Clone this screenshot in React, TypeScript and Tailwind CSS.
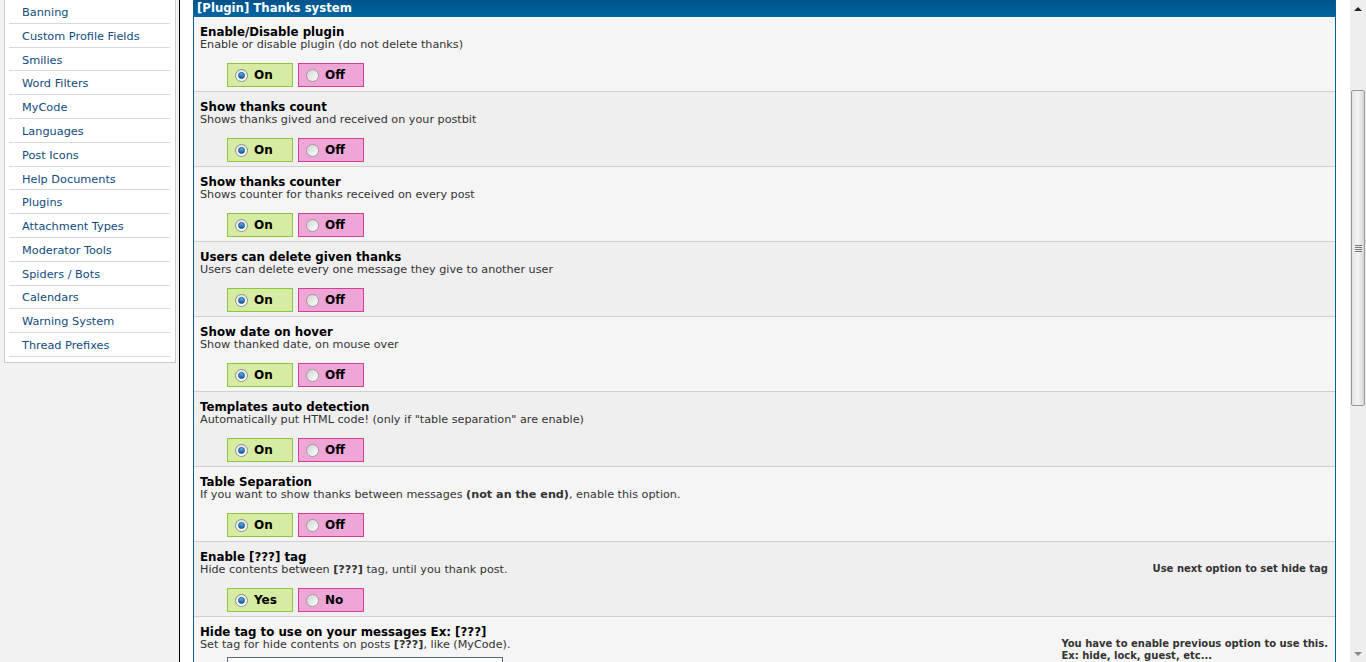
import React from "react";

type Row = {
  title: string;
  desc: React.ReactNode;
  kind: "toggle" | "input";
  yes?: string;
  no?: string;
  note?: React.ReactNode;
};

const menu = [
  "Banning",
  "Custom Profile Fields",
  "Smilies",
  "Word Filters",
  "MyCode",
  "Languages",
  "Post Icons",
  "Help Documents",
  "Plugins",
  "Attachment Types",
  "Moderator Tools",
  "Spiders / Bots",
  "Calendars",
  "Warning System",
  "Thread Prefixes",
];

const rows: Row[] = [
  { title: "Enable/Disable plugin", desc: "Enable or disable plugin (do not delete thanks)", kind: "toggle" },
  { title: "Show thanks count", desc: "Shows thanks gived and received on your postbit", kind: "toggle" },
  { title: "Show thanks counter", desc: "Shows counter for thanks received on every post", kind: "toggle" },
  { title: "Users can delete given thanks", desc: "Users can delete every one message they give to another user", kind: "toggle" },
  { title: "Show date on hover", desc: "Show thanked date, on mouse over", kind: "toggle" },
  { title: "Templates auto detection", desc: 'Automatically put HTML code! (only if "table separation" are enable)', kind: "toggle" },
  {
    title: "Table Separation",
    desc: (
      <>
        If you want to show thanks between messages <b>(not an the end)</b>, enable this option.
      </>
    ),
    kind: "toggle",
  },
  {
    title: "Enable [???] tag",
    desc: (
      <>
        Hide contents between <b>[???]</b> tag, until you thank post.
      </>
    ),
    kind: "toggle",
    yes: "Yes",
    no: "No",
    note: "Use next option to set hide tag",
  },
  {
    title: "Hide tag to use on your messages Ex: [???]",
    desc: (
      <>
        Set tag for hide contents on posts <b>[???]</b>, like (MyCode).
      </>
    ),
    kind: "input",
    note: (
      <>
        You have to enable previous option to use this.
        <br />
        Ex: hide, lock, guest, etc...
      </>
    ),
  },
];

const Radio = ({ checked }: { checked: boolean }) =>
  checked ? (
    <span className="flex h-[13px] w-[13px] items-center justify-center rounded-full border border-[#8a8f95] bg-gradient-to-b from-[#dfe6ec] to-[#ffffff]">
      <span className="h-[7px] w-[7px] rounded-full border border-[#1b4f7f] bg-gradient-to-b from-[#5fb2ea] to-[#0d5fa3]" />
    </span>
  ) : (
    <span className="h-[13px] w-[13px] rounded-full border border-[#9c9c9c] bg-gradient-to-br from-[#d2d2d2] to-[#ffffff]" />
  );

const Toggle = ({ yes = "On", no = "Off" }: { yes?: string; no?: string }) => (
  <div className="mt-[12px] flex gap-[5px] pl-[27px]">
    <label className="flex h-[24px] w-[66px] items-center gap-[6px] border border-[#8cc63f] bg-[#d6eca2] pl-[7px] text-[12px] font-bold text-black">
      <Radio checked />
      {yes}
    </label>
    <label className="flex h-[24px] w-[66px] items-center gap-[6px] border border-[#d13f8d] bg-[#eda6d5] pl-[7px] text-[12px] font-bold text-black">
      <Radio checked={false} />
      {no}
    </label>
  </div>
);

export default function App() {
  return (
    <div className="flex h-[662px] w-[1366px] overflow-hidden bg-white font-['DejaVu_Sans',Verdana,sans-serif]">
      <div className="flex min-w-0 flex-1">
        <aside className="w-[180px] shrink-0 border-r border-black bg-[#f2f2f2] pl-[4px] pr-[3px]">
          <div className="border border-t-0 border-[#cccccc] bg-white pb-[5px]">
            {menu.map((m) => (
              <div
                key={m}
                className="ml-[4px] mr-[5px] flex h-[23.8px] items-center border-b border-[#dadada] pl-[13px] pt-[4px] text-[11.3px] text-[#0f4b7e]"
              >
                {m}
              </div>
            ))}
          </div>
        </aside>

        <main className="min-w-0 flex-1 bg-white pl-[13px] pr-[14px]">
          <div className="border-x border-[#0f5c8e]">
            <div className="flex h-[17px] items-center bg-gradient-to-b from-[#02528a] to-[#0067a3] pl-[3px] text-[11.7px] font-bold text-white">
              [Plugin] Thanks system
            </div>
            {rows.map((r, i) => (
              <div
                key={r.title}
                className={`flex h-[75px] border-b border-[#d0d0d0] ${i % 2 === 0 ? "bg-[#f5f5f5]" : "bg-[#efefef]"}`}
              >
                <div className="flex-1 pl-[6px] pt-[9px]">
                  <div className="text-[11.8px] font-bold leading-[13px] text-black">{r.title}</div>
                  <div className="text-[11.2px] leading-[12px] text-[#333333]">{r.desc}</div>
                  {r.kind === "toggle" ? (
                    <Toggle yes={r.yes} no={r.no} />
                  ) : (
                    <div className="ml-[27px] mt-[6px] h-[22px] w-[276px] border border-[#566a7c] bg-white" />
                  )}
                </div>
                {r.note && (
                  <div className="pr-[7px] pt-[21px] text-left text-[10px] font-bold leading-[12px] text-[#333333]">
                    {r.note}
                  </div>
                )}
              </div>
            ))}
          </div>
        </main>
      </div>

      <div className="flex w-[16px] shrink-0 flex-col bg-[#eeeeee]">
        <div className="flex h-[17px] items-center justify-center">
          <span className="h-0 w-0 border-x-[4px] border-b-[4px] border-x-transparent border-b-[#222222]" />
        </div>
        <div className="h-[73px]" />
        <div className="mx-[1px] flex h-[316px] items-center justify-center rounded-[2px] border border-[#979797] bg-gradient-to-r from-[#e4e4e4] via-[#f4f4f4] to-[#d6d6d6]">
          <div className="flex flex-col gap-[1px]">
            <span className="h-[1px] w-[7px] bg-[#777777]" />
            <span className="h-[1px] w-[7px] bg-[#777777]" />
            <span className="h-[1px] w-[7px] bg-[#777777]" />
            <span className="h-[1px] w-[7px] bg-[#777777]" />
          </div>
        </div>
        <div className="flex-1" />
        <div className="flex h-[17px] items-center justify-center">
          <span className="h-0 w-0 border-x-[4px] border-t-[4px] border-x-transparent border-t-[#888888]" />
        </div>
      </div>
    </div>
  );
}
